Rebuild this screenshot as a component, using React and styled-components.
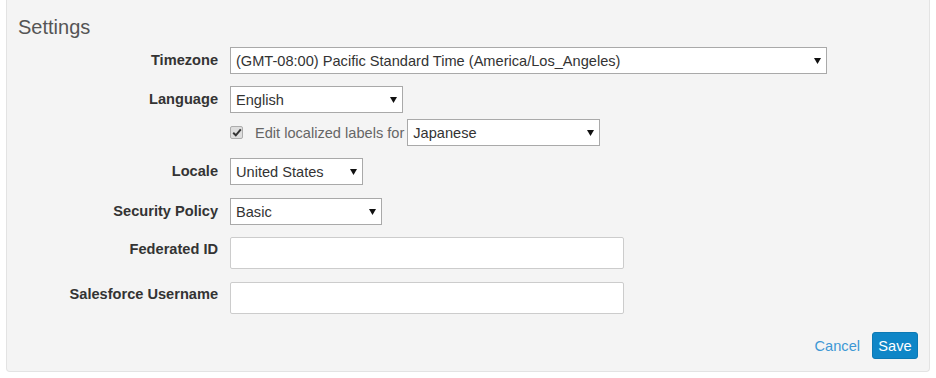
import React from "react";
import styled, { createGlobalStyle } from "styled-components";

const GlobalStyle = createGlobalStyle`
  html, body { margin: 0; padding: 0; background: #ffffff; }
  body { font-family: "Liberation Sans", Arial, sans-serif; color: #333; }
  * { box-sizing: border-box; }
`;

const Panel = styled.div`
  margin: 0 6px;
  width: 924px;
  height: 372px;
  background: #f4f4f4;
  border: 1px solid #e3e3e3;
  border-top: none;
  border-radius: 0 0 4px 4px;
  padding: 15px 11px 0 11px;
  display: flex;
  flex-direction: column;
`;

const Title = styled.h2`
  margin: 0;
  font-size: 20px;
  line-height: 24px;
  font-weight: normal;
  color: #555;
`;

const Form = styled.div`
  display: flex;
  flex-direction: column;
  margin-top: 8px;
`;

const Row = styled.div`
  display: grid;
  grid-template-columns: 200px 1fr;
  column-gap: 12px;
  align-items: center;
  margin-top: ${(p) => p.$gap || 0}px;
`;

const Label = styled.label`
  text-align: right;
  font-weight: bold;
  font-size: 14.6px;
  line-height: 17px;
  color: #333;
  white-space: nowrap;
  align-self: ${(p) => (p.$top ? "start" : "center")};
  padding-top: ${(p) => (p.$top ? "4px" : "0")};
`;

const Field = styled.div`
  display: flex;
  align-items: center;
`;

const SelectWrap = styled.span`
  position: relative;
  display: inline-block;
  width: ${(p) => p.$w}px;
  height: 27px;
  flex: none;
  margin-left: ${(p) => p.$ml || 0}px;
`;

const NativeSelect = styled.select`
  appearance: none;
  -webkit-appearance: none;
  width: 100%;
  height: 100%;
  border: 1px solid #a9a9a9;
  border-radius: 0;
  background: #fff;
  font-family: "Liberation Sans", Arial, sans-serif;
  font-size: 14.6px;
  color: #333;
  padding: 0 20px 0 5px;
  margin: 0;
  outline: none;
`;

const Arrow = styled.svg`
  position: absolute;
  right: 6px;
  top: 50%;
  margin-top: -3px;
  width: 7px;
  height: 6px;
  pointer-events: none;
`;

const Select = ({ w, ml, value }) => (
  <SelectWrap $w={w} $ml={ml}>
    <NativeSelect defaultValue={value}>
      <option>{value}</option>
    </NativeSelect>
    <Arrow viewBox="0 0 7 6">
      <polygon points="0,0 7,0 3.5,6" fill="#111" />
    </Arrow>
  </SelectWrap>
);

const TextInput = styled.input`
  width: 394px;
  height: 32px;
  border: 1px solid #ccc;
  border-radius: 2px;
  background: #fff;
  font-family: "Liberation Sans", Arial, sans-serif;
  font-size: 14px;
  padding: 0 6px;
  margin: 0;
  outline: none;
`;

const CheckBox = styled.span`
  width: 13px;
  height: 13px;
  border: 1px solid #adadad;
  border-radius: 2px;
  background: #dedede;
  display: inline-flex;
  align-items: center;
  justify-content: center;
  flex: none;
`;

const CheckText = styled.span`
  margin-left: 12px;
  font-size: 14.6px;
  color: #666;
  white-space: nowrap;
`;

const Actions = styled.div`
  display: flex;
  justify-content: flex-end;
  align-items: center;
  gap: 12px;
  margin-top: 18px;
`;

const CancelLink = styled.a`
  color: #3d98d4;
  font-size: 14.6px;
  text-decoration: none;
  cursor: pointer;
`;

const SaveButton = styled.button`
  width: 46px;
  height: 27px;
  padding: 0;
  background: #0f86c7;
  border: 1px solid #0c79b4;
  border-radius: 3px;
  color: #fff;
  font-family: "Liberation Sans", Arial, sans-serif;
  font-size: 14.6px;
  cursor: pointer;
`;

export default function App() {
  return (
    <>
      <GlobalStyle />
      <Panel>
        <Title>Settings</Title>
        <Form>
          <Row>
            <Label>Timezone</Label>
            <Field>
              <Select w={597} value="(GMT-08:00) Pacific Standard Time (America/Los_Angeles)" />
            </Field>
          </Row>
          <Row $gap={12}>
            <Label>Language</Label>
            <Field>
              <Select w={173} value="English" />
            </Field>
          </Row>
          <Row $gap={6}>
            <span />
            <Field>
              <CheckBox>
                <svg width="10" height="9" viewBox="0 0 10 9">
                  <path d="M1.2 4.8 L3.8 7.3 L8.8 1.4" fill="none" stroke="#333" strokeWidth="2" />
                </svg>
              </CheckBox>
              <CheckText>Edit localized labels for</CheckText>
              <Select w={193} ml={3} value="Japanese" />
            </Field>
          </Row>
          <Row $gap={12}>
            <Label>Locale</Label>
            <Field>
              <Select w={133} value="United States" />
            </Field>
          </Row>
          <Row $gap={13}>
            <Label>Security Policy</Label>
            <Field>
              <Select w={152} value="Basic" />
            </Field>
          </Row>
          <Row $gap={12}>
            <Label $top>Federated ID</Label>
            <Field>
              <TextInput type="text" />
            </Field>
          </Row>
          <Row $gap={13}>
            <Label $top>Salesforce Username</Label>
            <Field>
              <TextInput type="text" />
            </Field>
          </Row>
        </Form>
        <Actions>
          <CancelLink>Cancel</CancelLink>
          <SaveButton>Save</SaveButton>
        </Actions>
      </Panel>
    </>
  );
}
